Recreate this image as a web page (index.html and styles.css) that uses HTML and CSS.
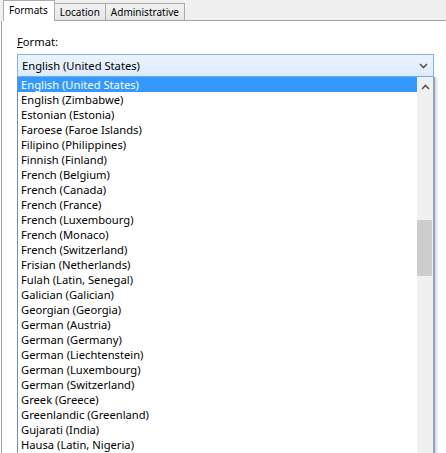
FILE: index.html
```html
<!DOCTYPE html>
<html>
<head>
<meta charset="utf-8">
<link rel="stylesheet" href="styles.css">
</head>
<body>
<div class="tabs">
  <div class="tab active">Formats</div>
  <div class="tab">Location</div>
  <div class="tab">Administrative</div>
  <div class="tab-fill"></div>
</div>
<div class="panel">
  <div class="label"><span class="u">F</span>ormat:</div>
  <div class="combo">
    <span>English (United States)</span>
    <svg class="chev" width="9" height="6" viewBox="0 0 9 6"><path d="M1 1 L4.5 4.5 L8 1" fill="none" stroke="#555" stroke-width="1.6"/></svg>
  </div>
  <div class="list">
    <div class="items">
      <div class="item sel">English (United States)</div>
      <div class="item">English (Zimbabwe)</div>
      <div class="item">Estonian (Estonia)</div>
      <div class="item">Faroese (Faroe Islands)</div>
      <div class="item">Filipino (Philippines)</div>
      <div class="item">Finnish (Finland)</div>
      <div class="item">French (Belgium)</div>
      <div class="item">French (Canada)</div>
      <div class="item">French (France)</div>
      <div class="item">French (Luxembourg)</div>
      <div class="item">French (Monaco)</div>
      <div class="item">French (Switzerland)</div>
      <div class="item">Frisian (Netherlands)</div>
      <div class="item">Fulah (Latin, Senegal)</div>
      <div class="item">Galician (Galician)</div>
      <div class="item">Georgian (Georgia)</div>
      <div class="item">German (Austria)</div>
      <div class="item">German (Germany)</div>
      <div class="item">German (Liechtenstein)</div>
      <div class="item">German (Luxembourg)</div>
      <div class="item">German (Switzerland)</div>
      <div class="item">Greek (Greece)</div>
      <div class="item">Greenlandic (Greenland)</div>
      <div class="item">Gujarati (India)</div>
      <div class="item">Hausa (Latin, Nigeria)</div>
    </div>
    <div class="scroll">
      <svg class="up" width="9" height="6" viewBox="0 0 9 6"><path d="M1 5 L4.5 1.5 L8 5" fill="none" stroke="#555" stroke-width="1.6"/></svg>
      <div class="thumb"></div>
    </div>
  </div>
</div>
</body>
</html>
```
FILE: styles.css
```css
html, body {
  margin: 0;
  padding: 0;
  background: #fff;
  overflow: hidden;
}
body {
  width: 446px;
  height: 453px;
  font-family: "Noto Sans", "Open Sans", sans-serif;
  font-size: 11.2px;
  color: #000;
}
.tabs {
  display: flex;
  align-items: flex-end;
  height: 21px;
  background: #f0f0f0;
  padding-left: 3px;
  box-sizing: border-box;
  font-size: 10px;
}
.tab {
  height: 18px;
  box-sizing: border-box;
  border: 1px solid #acacac;
  border-bottom: 1px solid #a0a0a0;
  border-left: none;
  background: linear-gradient(#f2f2f2, #e6e6e6);
  padding: 0 5px 0 5px;
  line-height: 16px;
}
.tab.active {
  height: 21px;
  background: #fff;
  border-left: 1px solid #acacac;
  border-bottom: none;
  padding: 0 6px 0 5px;
  line-height: 18px;
}
.tab-fill {
  flex: 1;
  border-bottom: 1px solid #a0a0a0;
}
.panel {
  height: 432px;
  border-left: 1px solid #a0a0a0;
  margin-left: 1px;
  padding-left: 15px;
  padding-top: 13px;
  box-sizing: border-box;
}
.label {
  height: 20px;
  line-height: 15px;
}
.u { text-decoration: underline; }
.combo {
  width: 417px;
  height: 23px;
  box-sizing: border-box;
  border: 1px solid #7eb4ea;
  background: linear-gradient(#ecf4fc, #dcecfc);
  display: flex;
  align-items: center;
  padding-left: 4px;
}
.combo span { flex: 1; line-height: 15px; }
.chev { margin-right: 5px; }
.list {
  width: 418px;
  height: 380px;
  box-sizing: border-box;
  border-left: 1px solid #6b8fbf;
  border-right: 2px solid #8aa3c2;
  box-shadow: 2px 0 2px rgba(0,0,0,0.15);
  display: flex;
  background: #fff;
}
.items { flex: 1; }
.item {
  height: 15px;
  line-height: 15px;
  padding-left: 3px;
  white-space: nowrap;
  overflow: hidden;
}
.item.sel {
  background: #3399ff;
  color: #fff;
}
.scroll {
  width: 16px;
  background: #f0f0f0;
  position: relative;
}
.up {
  display: block;
  margin: 7px 0 0 4px;
}
.thumb {
  position: absolute;
  left: 0;
  width: 15px;
  top: 143px;
  height: 56px;
  background: #cdcdcd;
}
```
